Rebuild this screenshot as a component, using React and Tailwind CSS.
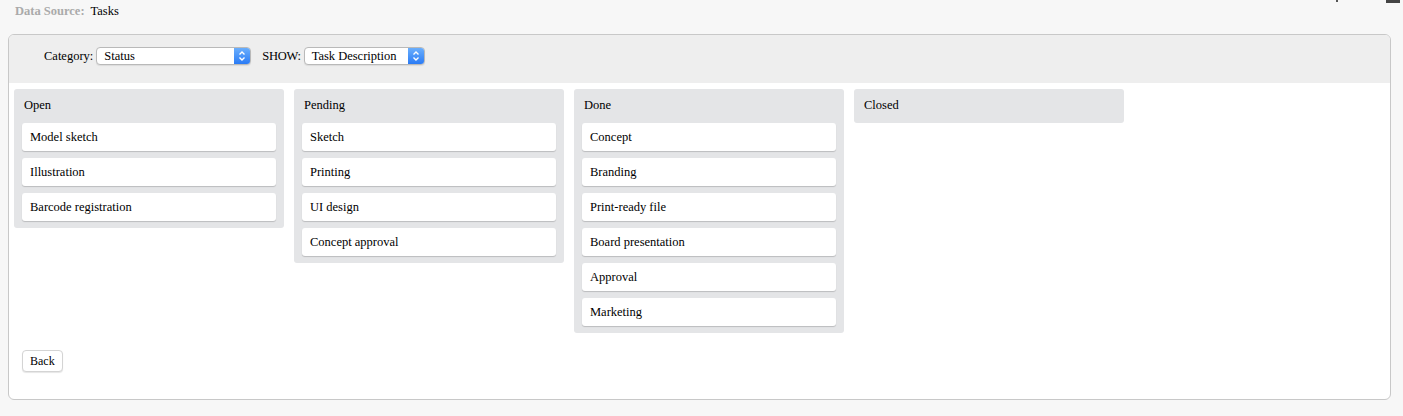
const columns = [
  { title: "Open", items: ["Model sketch", "Illustration", "Barcode registration"] },
  { title: "Pending", items: ["Sketch", "Printing", "UI design", "Concept approval"] },
  {
    title: "Done",
    items: ["Concept", "Branding", "Print-ready file", "Board presentation", "Approval", "Marketing"],
  },
  { title: "Closed", items: [] },
];

function SelectBox({ value, width }) {
  return (
    <div
      className={`flex h-[18px] items-stretch overflow-hidden rounded-[4px] border border-[#b9b9b9] bg-white shadow-[0_1px_1px_rgba(0,0,0,0.08)] ${width}`}
    >
      <span className="flex flex-1 items-center pl-[7px] text-[12.5px] leading-none text-black">{value}</span>
      <span className="flex w-[16px] items-center justify-center bg-gradient-to-b from-[#6aaefc] to-[#2a7bf5]">
        <svg width="8" height="12" viewBox="0 0 8 12" fill="none" stroke="white" strokeWidth="1.4">
          <path d="M1.5 4.5 L4 2 L6.5 4.5" />
          <path d="M1.5 7.5 L4 10 L6.5 7.5" />
        </svg>
      </span>
    </div>
  );
}

function Column({ title, items }) {
  return (
    <div className="w-[270px] rounded-[3px] bg-[#e4e5e7] px-[8px]">
      <div className="flex h-[34px] items-center px-[2px] pb-[2px] text-[12.5px] text-black">{title}</div>
      {items.length ? (
        <div className="flex flex-col gap-[7px] pb-[7px]">
          {items.map((item) => (
            <div
              key={item}
              className="flex h-[28px] items-center rounded-[3px] bg-white px-[8px] text-[12.5px] text-black shadow-[0_1px_1px_rgba(0,0,0,0.18)]"
            >
              {item}
            </div>
          ))}
        </div>
      ) : null}
    </div>
  );
}

export default function App() {
  return (
    <div
      className="relative h-[416px] w-[1403px] overflow-hidden bg-[#f7f7f7]"
      style={{ fontFamily: '"Liberation Serif", "DejaVu Serif", serif' }}
    >
      <div className="absolute right-[3px] top-0 h-[3px] w-[14px] bg-[#444]" />
      <div className="absolute right-[65px] top-0 h-[2px] w-[2px] bg-[#555]" />
      <div className="flex h-[34px] items-start px-[15px] pt-[2px] text-[12.5px]">
        <span className="font-bold text-[#aaaaaa]">Data Source:</span>
        <span className="ml-[6px] text-black">Tasks</span>
      </div>
      <div className="mx-[8px] h-[366px] w-[1383px] overflow-hidden rounded-[6px] border border-[#c8c8c8] bg-white">
        <div className="flex h-[48px] items-start bg-[#eeeeee] pl-[35px] pt-[12px] text-[12.5px] text-black">
          <span className="mr-[3px] leading-[18px]">Category:</span>
          <SelectBox value="Status" width="w-[155px]" />
          <span className="ml-[11px] mr-[3px] leading-[18px] tracking-[-0.3px]">SHOW:</span>
          <SelectBox value="Task Description" width="w-[121px]" />
        </div>
        <div className="flex items-start gap-[10px] px-[5px] pt-[6px]">
          {columns.map((c) => (
            <Column key={c.title} title={c.title} items={c.items} />
          ))}
        </div>
        <div className="pl-[13px] pt-[15px]">
          <button className="h-[22px] rounded-[4px] border border-[#d4d4d4] bg-white px-[7px] text-[12px] text-black shadow-[0_1px_1px_rgba(0,0,0,0.1)]">
            Back
          </button>
        </div>
      </div>
    </div>
  );
}
